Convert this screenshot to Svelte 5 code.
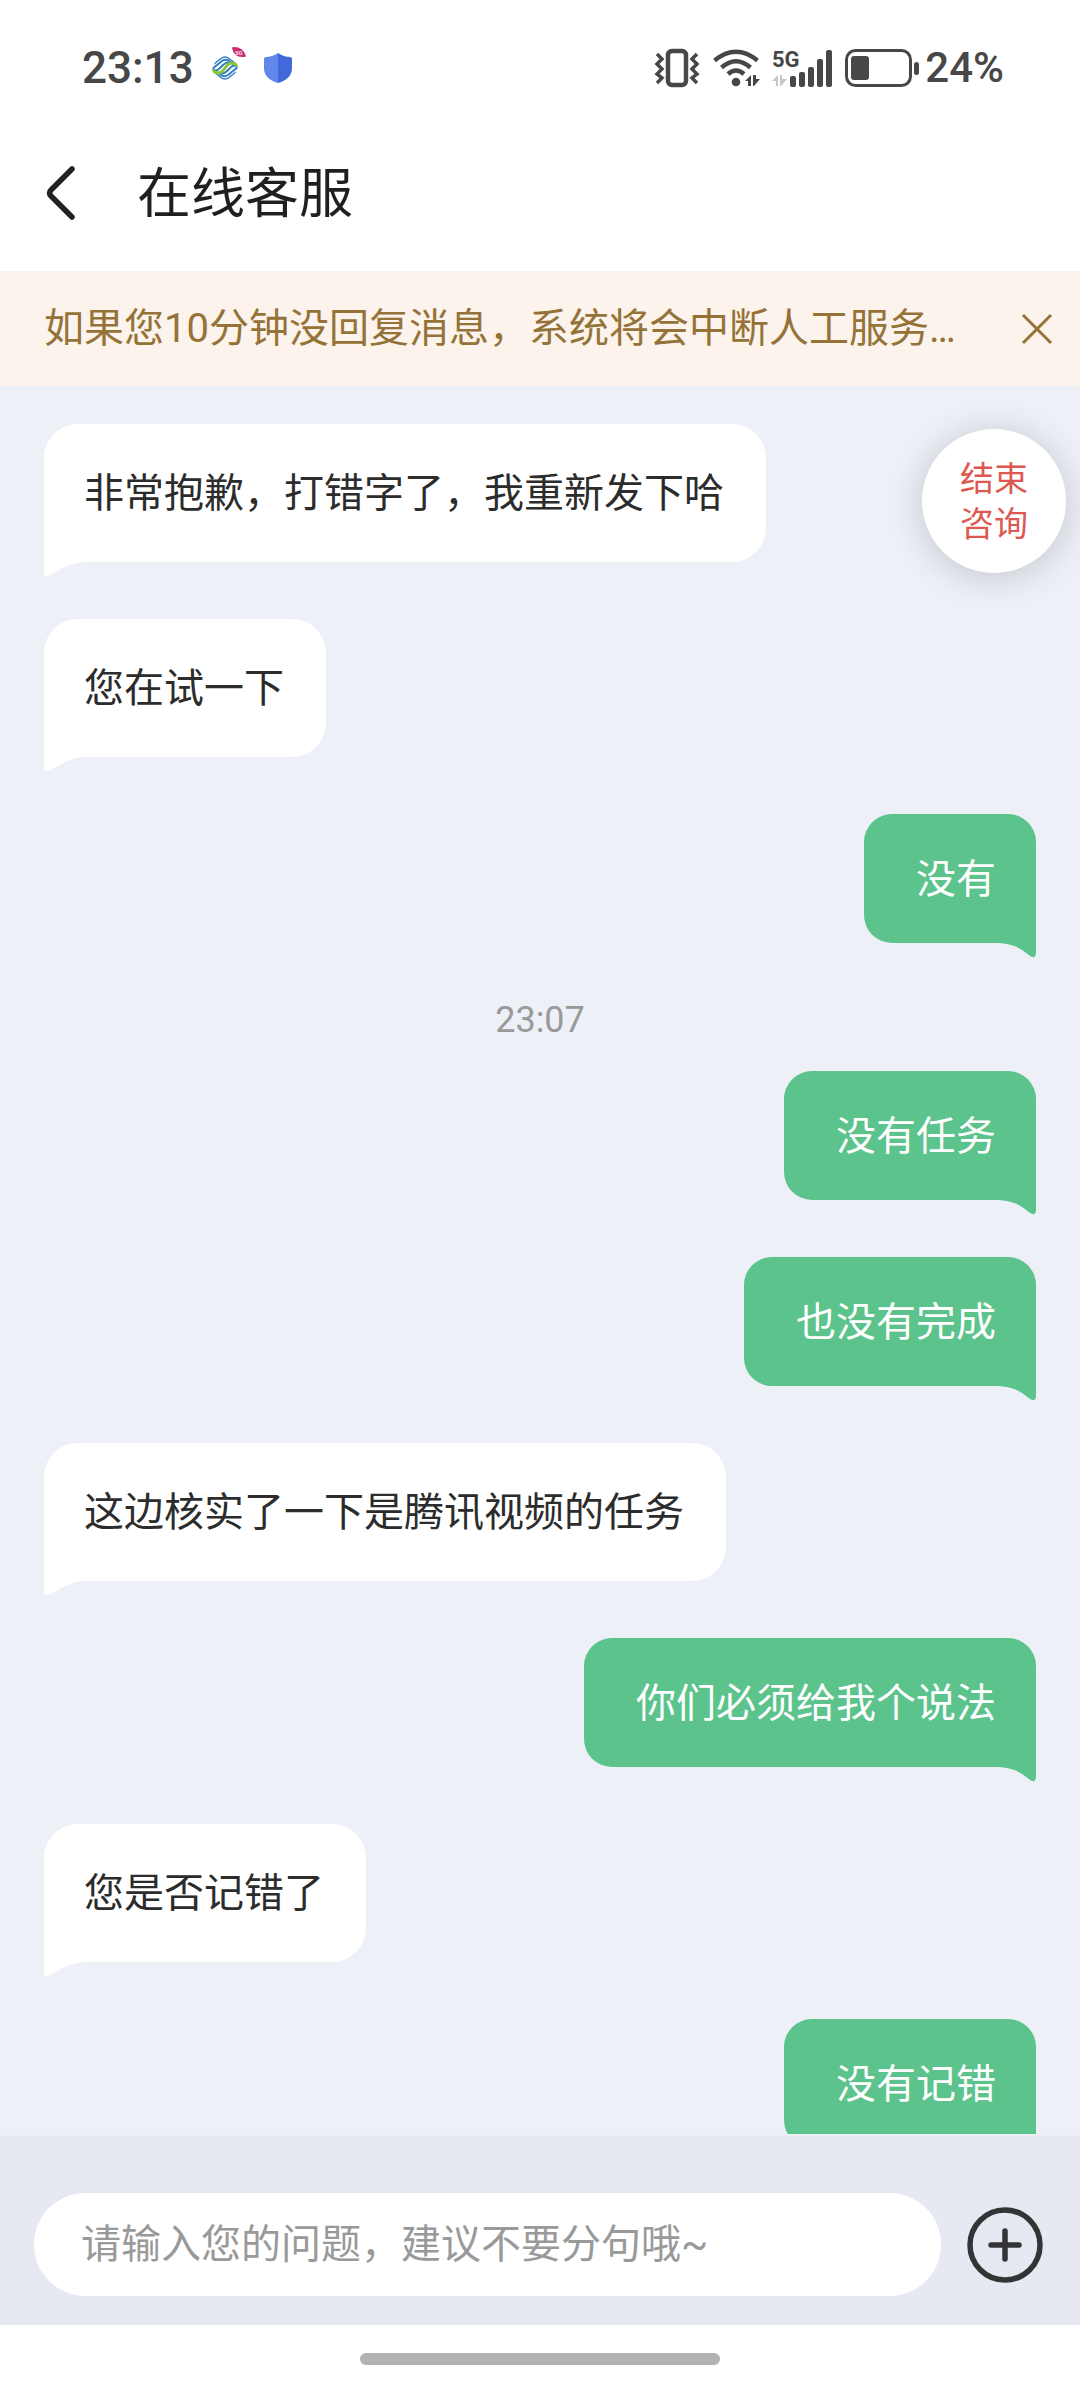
<script>
  /**
   * Online customer service chat page.
   * Shows the conversation, a reminder banner and the message input.
   */

  let messages = $state([
    { type: 'agent', text: '非常抱歉，打错字了，我重新发下哈' },
    { type: 'agent', text: '您在试一下' },
    { type: 'user', text: '没有' },
    { type: 'time', text: '23:07' },
    { type: 'user', text: '没有任务' },
    { type: 'user', text: '也没有完成' },
    { type: 'agent', text: '这边核实了一下是腾讯视频的任务' },
    { type: 'user', text: '你们必须给我个说法' },
    { type: 'agent', text: '您是否记错了' },
    { type: 'user', text: '没有记错' }
  ]);

  let showNotice = $state(true);
  let draft = $state('');

  /**
   * Appends the typed text to the conversation.
   */
  function sendMessage(event) {
    event.preventDefault();
    const text = draft.trim();
    if (!text) return;
    messages.push({ type: 'user', text });
    draft = '';
  }
</script>

{#snippet waves()}
  <path d="M2 9 L9 3.500 Q13 0.500 17 3.500 L24 9" stroke-width="1.500" />
  <path d="M0 14 L10 6 Q13.500 3.500 17 6 L25 12" />
  <path d="M3 15.500 Q6 15.500 8 13 L11 10 Q14 7 17 7.500" />
{/snippet}

<div class="page">
  <div class="status-bar">
    <div class="status-left">
      <span class="clock">23:13</span>
      <svg width="34" height="42" viewBox="0 0 34 42" aria-hidden="true">
        <defs>
          <clipPath id="carrier-shape">
            <path d="M13 0 Q16 0 18 2 L24 7 Q27 10 25 15 Q21 24 15 26 Q11 27 8 24 L2 19 Q-1 16 1 11 Q5 2 13 0Z" />
          </clipPath>
        </defs>
        <g transform="translate(0 8)">
          <g clip-path="url(#carrier-shape)" fill="none" stroke="#2f7fc3" stroke-width="2">
            {@render waves()}
            <g transform="rotate(180 13 13)">{@render waves()}</g>
            <path stroke="#8fc43a" stroke-width="3" d="M0 15 Q5 19 8.500 17.500 Q11 16 13 13 Q15 10 17.500 8.500 Q21 7 26 11" />
          </g>
        </g>
        <path fill="#c92a72" d="M20 1 Q20 0 22 0 Q31 0 34 9 Q34 10 32 10 Q22 11 20 1Z" />
        <text class="tiny" x="23" y="8">5G</text>
      </svg>
      <svg width="28" height="32" viewBox="0 0 28 32" aria-hidden="true">
        <path fill="#6287ea" d="M14 1 Q8 5 2 5 Q0 5 0 7 V16 Q0 27 14 31Z" />
        <path fill="#4169dc" d="M14 1 Q20 5 26 5 Q28 5 28 7 V16 Q28 27 14 31Z" />
      </svg>
    </div>

    <div class="status-right">
      <svg width="46" height="38" viewBox="0 0 46 38" fill="none" stroke="#474747" aria-hidden="true">
        <rect x="14" y="2" width="18" height="34" rx="4" stroke-width="4.500" />
        <path stroke-width="3.500" d="M3 5 L8 10 L3 15 L8 20 L3 25 L8 29 L3 34 M43 5 L38 10 L43 15 L38 20 L43 25 L38 29 L43 34" />
      </svg>
      <svg width="46" height="38" viewBox="0 0 46 38" aria-hidden="true">
        <g fill="none" stroke="#474747" stroke-width="4.500">
          <path d="M1.500 11.500 Q23 -6 44.500 11.500" />
          <path d="M8.500 18.500 Q23 6 37.500 18.500" />
          <path d="M15 25 Q23 18 31 25" />
        </g>
        <circle cx="23" cy="33" r="4.300" fill="#474747" />
        <path fill="#474747" d="M32 32 L38 26 V37 H35 V32Z M40 26 H43 V30 H47 L41 37 H40Z" />
      </svg>
      <svg width="60" height="38" viewBox="0 0 60 38" aria-hidden="true">
        <text class="network" x="0" y="18">5G</text>
        <path fill="#c6c6c6" d="M0 32 L6 26 V37 H4 V32Z M8 26 H10 V30 H15 L9 37 H8Z" />
        <g fill="#474747">
          <rect x="18" y="27" width="6" height="11" rx="2" />
          <rect x="27" y="23" width="6" height="15" rx="2" />
          <rect x="36" y="18" width="6" height="20" rx="2" />
          <rect x="45" y="10" width="6" height="28" rx="2" />
          <rect x="54" y="1" width="6" height="37" rx="2" />
        </g>
      </svg>
      <div class="battery">
        <svg width="74" height="38" viewBox="0 0 74 38" aria-hidden="true">
          <rect x="1.500" y="1.500" width="64" height="35" rx="9" fill="none" stroke="#474747" stroke-width="3" />
          <rect x="6" y="7" width="18" height="24" rx="3" fill="#474747" />
          <rect x="69" y="13" width="5" height="13" rx="2.500" fill="#474747" />
        </svg>
        <span>24%</span>
      </div>
    </div>
  </div>

  <header class="header">
    <button class="back-btn" aria-label="返回">
      <svg width="30" height="56" viewBox="0 0 30 56" aria-hidden="true">
        <path d="M26 3 L5 24 Q2 27 5 30 L26 51" fill="none" stroke="#222" stroke-width="5.500" stroke-linecap="round" />
      </svg>
    </button>
    <h1>在线客服</h1>
  </header>

  {#if showNotice}
    <div class="notice">
      <p>如果您10分钟没回复消息，系统将会中断人工服务…</p>
      <button class="close-btn" onclick={() => (showNotice = false)} aria-label="关闭">
        <svg width="30" height="30" viewBox="0 0 30 30" aria-hidden="true">
          <path d="M1 1 L29 29 M29 1 L1 29" fill="none" stroke="#957338" stroke-width="3" />
        </svg>
      </button>
    </div>
  {/if}

  <main class="chat">
    <div class="messages">
      {#each messages as message}
        {#if message.type === 'time'}
          <time class="time">{message.text}</time>
        {:else}
          <div class="bubble {message.type}">
            {message.text}
            <svg class="tail" width="42" height="16" viewBox="0 0 42 16" aria-hidden="true">
              {#if message.type === 'agent'}
                <path d="M0 0 H42 V1 C24 1 14 11 4 15 Q0 16 0 12Z" />
              {:else}
                <path d="M0 0 H42 V12 Q41 17 36 14 C28 7 20 1 0 1Z" />
              {/if}
            </svg>
          </div>
        {/if}
      {/each}
    </div>
    <button class="end-btn">结束<br />咨询</button>
  </main>

  <form class="input-bar" onsubmit={sendMessage}>
    <input type="text" bind:value={draft} placeholder="请输入您的问题，建议不要分句哦~" aria-label="消息" />
    <button class="more-btn" type="button" aria-label="更多">
      <svg width="76" height="76" viewBox="0 0 76 76" fill="none" stroke="#333435" aria-hidden="true">
        <circle cx="38" cy="38" r="35" stroke-width="5.500" />
        <path d="M38 24 V52 M24 38 H52" stroke-width="5.500" stroke-linecap="round" />
      </svg>
    </button>
  </form>

  <div class="home-area">
    <div class="home-indicator"></div>
  </div>
</div>

<style>
  :global(body) {
    margin: 0;
  }

  .page {
    display: flex;
    flex-direction: column;
    height: 100vh;
    background: #fff;
    color: #2c2c2c;
    font-family: Roboto, 'Noto Sans CJK SC', sans-serif;
    font-size: 40px;
  }

  svg {
    display: block;
    flex: none;
    overflow: visible;
  }

  button {
    padding: 0;
    border: none;
    background: none;
    color: inherit;
    font: inherit;
    cursor: pointer;
  }

  .status-bar {
    display: flex;
    justify-content: space-between;
    padding: 40px 76px 20px 82px;
    color: #474747;
    font-size: 42px;
    font-weight: 500;
    line-height: 56px;
  }

  .status-left,
  .status-right,
  .battery {
    display: flex;
    align-items: center;
  }

  .status-left {
    gap: 18px;
  }

  .status-right {
    gap: 13px;
  }

  .battery {
    gap: 6px;
  }

  .clock {
    font-size: 44px;
  }

  .tiny {
    fill: #fff;
    font-size: 6px;
  }

  .network {
    fill: #474747;
    font-size: 22px;
    font-weight: 700;
    line-height: 22px;
  }

  .header {
    display: flex;
    align-items: center;
    gap: 61px;
    height: 155px;
    padding: 0 46px;
  }

  h1 {
    margin: 0;
    padding-top: 2px;
    color: #1f1f1f;
    font-size: 54px;
    font-weight: 400;
    line-height: 72px;
  }

  .notice {
    display: flex;
    align-items: center;
    justify-content: space-between;
    gap: 24px;
    height: 115px;
    padding: 0 28px 0 44px;
    background: #fbf3ec;
    color: #957338;
  }

  .notice p {
    margin: 0;
    overflow: hidden;
    line-height: 56px;
    text-overflow: ellipsis;
    white-space: nowrap;
  }

  .chat {
    position: relative;
    flex: 1;
    min-height: 0;
    background: #edf0f7;
  }

  .messages {
    display: flex;
    flex-direction: column;
    box-sizing: border-box;
    height: 100%;
    padding: 38px 44px 0;
    overflow-y: auto;
    scrollbar-width: none;
  }

  .bubble {
    position: relative;
    flex: none;
    margin-bottom: 57px;
    line-height: 57px;
  }

  .agent {
    align-self: flex-start;
    padding: 41px 42px 40px 40px;
    border-radius: 34px 34px 34px 0;
    background: #fff;
  }

  .user {
    align-self: flex-end;
    padding: 37px 40px 35px 52px;
    border-radius: 28px 28px 0 28px;
    background: #5bc38b;
    color: #fff;
  }

  .tail {
    position: absolute;
    top: 100%;
    margin-top: -1px;
  }

  .agent .tail {
    left: 0;
    fill: #fff;
  }

  .user .tail {
    right: 0;
    fill: #5bc38b;
  }

  .time {
    align-self: center;
    flex: none;
    margin-bottom: 31px;
    color: #999;
    font-size: 36px;
    line-height: 40px;
  }

  .end-btn {
    position: absolute;
    top: 43px;
    right: 14px;
    width: 144px;
    height: 144px;
    padding-top: 2px;
    border-radius: 50%;
    background: #fff;
    box-shadow: 0 4px 36px rgba(0, 0, 0, 0.18);
    color: #dc5850;
    font-size: 34px;
    line-height: 45px;
  }

  .input-bar {
    display: flex;
    align-items: center;
    gap: 26px;
    padding: 57px 37px 29px 34px;
    border-top: 2px solid #eceef1;
    background: #e6e9f1;
  }

  input {
    flex: 1;
    box-sizing: border-box;
    min-width: 0;
    height: 103px;
    padding: 0 47px;
    border: none;
    border-radius: 52px;
    outline: none;
    background: #fff;
    color: #2c2c2c;
    font: inherit;
  }

  input::placeholder {
    color: #999;
    opacity: 1;
  }

  .home-area {
    display: flex;
    justify-content: center;
    padding: 28px 0 27px;
  }

  .home-indicator {
    width: 33.333%;
    height: 12px;
    border-radius: 6px;
    background: #b2b2b2;
  }
</style>
